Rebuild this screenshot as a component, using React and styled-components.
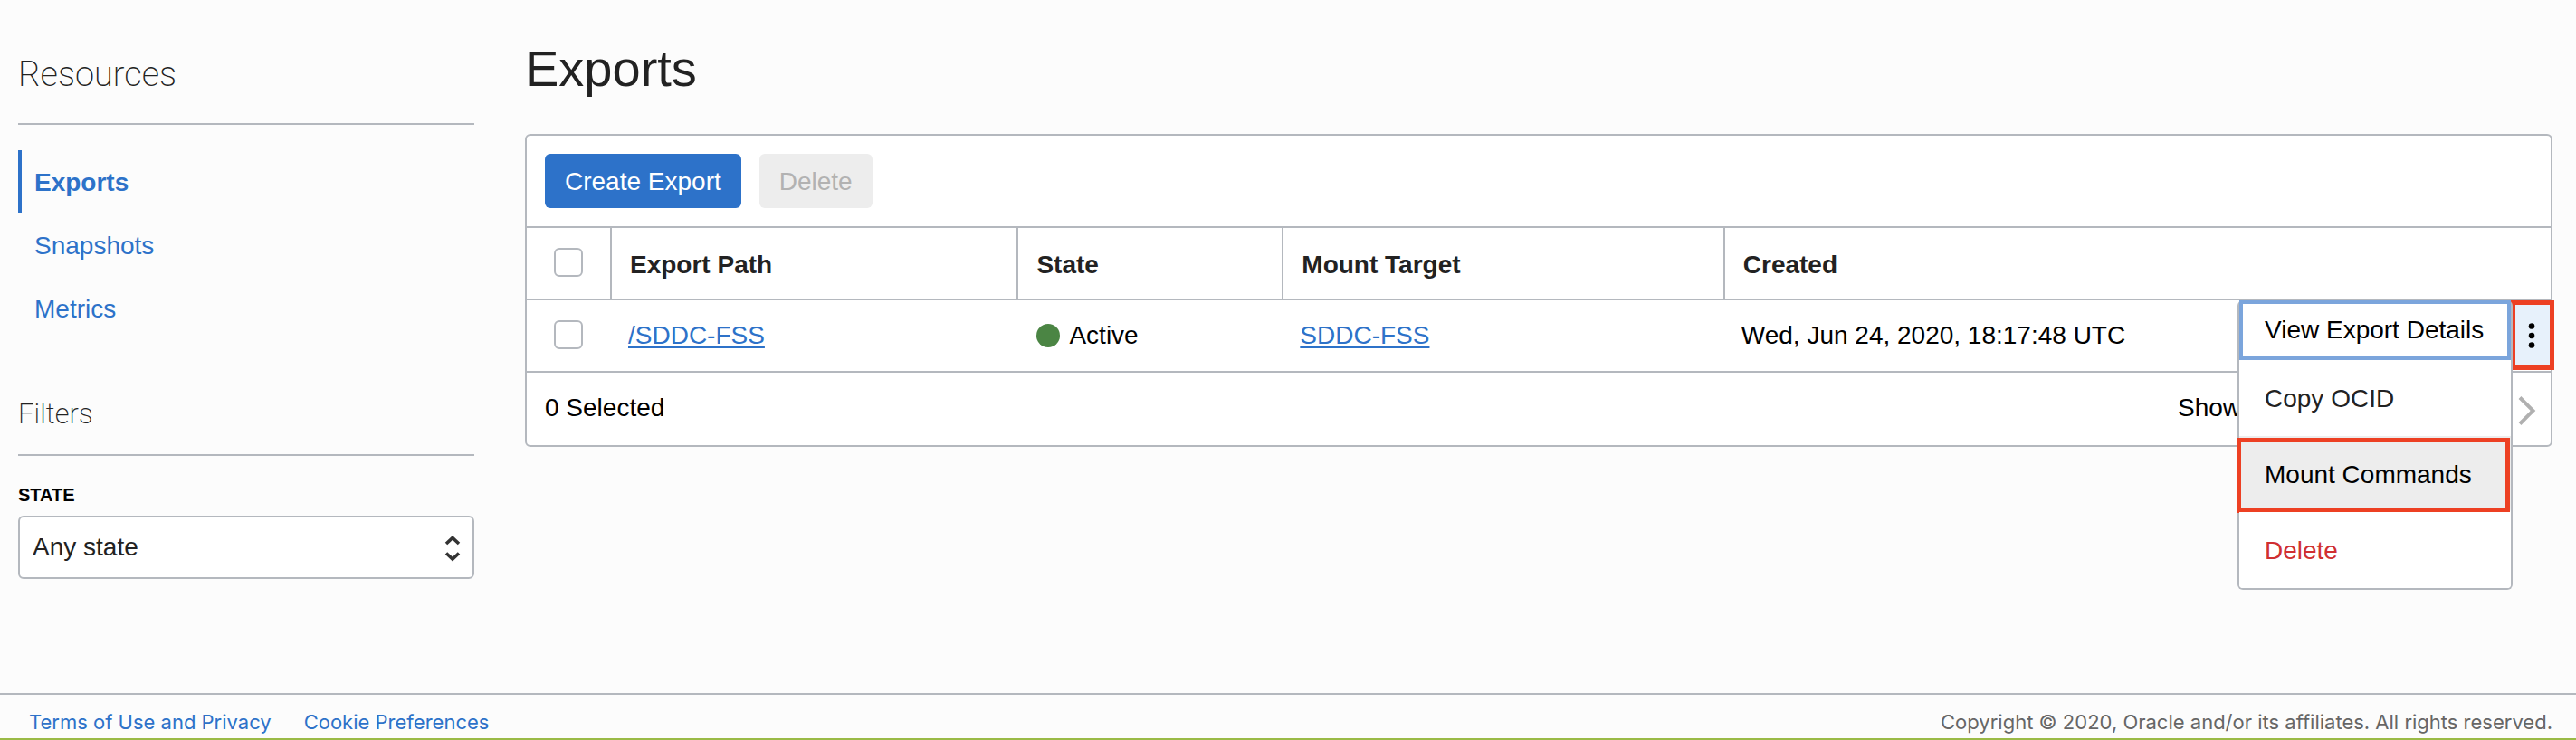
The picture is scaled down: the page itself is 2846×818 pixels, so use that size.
import React from "react";
import styled, { createGlobalStyle, css } from "styled-components";

const line = "#b4b8be";
const blue = "#2d72c9";
const callout = "#ed4023";

const GlobalStyle = createGlobalStyle`
  *, *::before, *::after { box-sizing: border-box; }
  body {
    margin: 0;
    background: #fcfcfc;
    color: #222;
    font: 28px/32px "Liberation Sans", Arial, sans-serif;
  }
  button, select { font: inherit; }
  h1, h2, ul { margin: 0; padding: 0; }
  ul { list-style: none; }
`;

const Page = styled.div`
  display: flex;
  flex-direction: column;
  min-height: 100vh;
`;

const Content = styled.div`
  flex: 1;
  display: flex;
  gap: 56px;
  padding: 0 26px 0 20px;
`;

const Sidebar = styled.aside`
  flex: none;
  width: 504px;
  padding-top: 58px;
`;

const SideTitle = styled.h2`
  font-family: Roboto, "Liberation Sans", sans-serif;
  font-weight: 200;
  font-size: ${(p) => (p.$small ? 31 : 38)}px;
  line-height: 48px;
  padding-bottom: ${(p) => (p.$small ? 20 : 30)}px;
  border-bottom: 2px solid ${line};
`;

const Nav = styled.ul`
  padding: 28px 0 58px;
`;

const NavLink = styled.a`
  display: flex;
  align-items: center;
  height: 70px;
  padding: 2px 0 0 14px;
  border-left: 4px solid ${(p) => (p.$active ? blue : "transparent")};
  color: ${blue};
  font-weight: ${(p) => (p.$active ? 700 : 400)};
  text-decoration: none;
`;

const FilterLabel = styled.label`
  display: block;
  padding: 28px 0 8px;
  color: #000;
  font-size: 20px;
  line-height: 30px;
  font-weight: 700;
`;

const SelectBox = styled.div`
  display: grid;
  align-items: center;
  & > * { grid-area: 1 / 1; }
  svg {
    justify-self: end;
    margin: 2px 14px 0 0;
    pointer-events: none;
  }
`;

const Select = styled.select`
  appearance: none;
  width: 100%;
  height: 70px;
  padding: 0 48px 0 14px;
  border: 2px solid ${line};
  border-radius: 6px;
  background: #fff;
  color: #222;
`;

const Main = styled.main`
  flex: 1;
  min-width: 0;
  padding-top: 44px;
`;

const Title = styled.h1`
  font-size: 56px;
  line-height: 64px;
  font-weight: 400;
  margin-bottom: 40px;
`;

const Panel = styled.section`
  position: relative;
  border: 2px solid ${line};
  border-radius: 6px;
  background: #fff;
`;

const Toolbar = styled.div`
  display: flex;
  gap: 20px;
  padding: 20px;
  border-bottom: 2px solid ${line};
`;

const Button = styled.button`
  height: 60px;
  padding: 2px 22px 0;
  border: 0;
  border-radius: 6px;
  background: ${blue};
  color: #fff;
  &:disabled {
    background: #ededed;
    color: #b2b2b2;
  }
`;

const Table = styled.table`
  width: 100%;
  table-layout: fixed;
  border-collapse: separate;
  border-spacing: 0;
  tr { height: 80px; }
`;

const Col = styled.col`
  width: ${(p) => p.$w};
`;

const cell = css`
  padding: 0 0 0 18px;
  border-bottom: 2px solid ${line};
  text-align: left;
`;

const Th = styled.th`
  ${cell}
  padding: 4px 0 0 20px;
  border-right: ${(p) => (p.$divided ? 2 : 0)}px solid ${line};
  color: #222;
`;

const Td = styled.td`
  ${cell}
  color: #000;
`;

const CheckCell = styled.td`
  padding: 0 0 0 30px;
  border-bottom: 2px solid ${line};
  border-right: ${(p) => (p.$divided ? 2 : 0)}px solid ${line};
`;

const Checkbox = styled.input.attrs({ type: "checkbox" })`
  appearance: none;
  display: block;
  width: 32px;
  height: 32px;
  margin: 0 0 2px;
  border: 2px solid ${line};
  border-radius: 6px;
  background: #fff;
`;

const PathLink = styled.a`
  color: ${blue};
  text-decoration: underline;
  text-decoration-thickness: 2px;
  text-underline-offset: 3px;
`;

const State = styled.span`
  display: flex;
  align-items: center;
  gap: 10px;
  padding-left: 2px;
  &::before {
    content: "";
    width: 26px;
    height: 26px;
    border-radius: 50%;
    background: #4b8544;
  }
`;

const ActionCell = styled(Td)`
  position: relative;
  padding: 5px 1px 6px;
  vertical-align: top;
`;

const KebabButton = styled.button`
  display: flex;
  align-items: center;
  justify-content: center;
  width: 38px;
  height: 67px;
  margin-left: auto;
  padding: 0 2px 0 0;
  border: 0;
  background: #e7f1fb;
  outline: 5px solid ${callout};
`;

const Menu = styled.ul`
  position: absolute;
  z-index: 1;
  top: 0;
  right: 42px;
  width: 304px;
  border: 2px solid ${line};
  border-top: 0;
  border-radius: 6px;
  background: #fff;
`;

const MenuItem = styled.button`
  position: relative;
  display: block;
  width: 100%;
  height: ${(p) => (p.$focused ? 66 : 84)}px;
  padding: ${(p) => (p.$focused ? "0 0 0 24px" : "2px 0 0 28px")};
  border: ${(p) => (p.$focused ? "4px solid #7ba5dc" : "0")};
  border-radius: ${(p) => (p.$focused ? 0 : "0 0 4px 4px")};
  background: ${(p) => (p.$marked ? "#ededed" : "#fff")};
  color: ${(p) => p.$color || "#000"};
  text-align: left;
  ${(p) =>
    p.$marked &&
    css`
      &::after {
        content: "";
        position: absolute;
        inset: 2px 1px -1px -3px;
        border: 5px solid ${callout};
      }
    `}
`;

const PanelFooter = styled.div`
  display: flex;
  align-items: center;
  height: 80px;
  padding: 0 16px 2px 20px;
  color: #000;
`;

const Paging = styled.div`
  display: flex;
  align-items: center;
  justify-content: space-between;
  width: 396px;
  margin-left: auto;
`;

const NextButton = styled.button`
  display: flex;
  padding: 6px 0 0;
  border: 0;
  background: none;
`;

const Footer = styled.footer`
  display: flex;
  justify-content: space-between;
  height: 52px;
  padding: 16px 26px 0 32px;
  border-top: 2px solid ${line};
  border-bottom: 2px solid #9aba46;
  color: #666;
  font: 22px/28px Inter, "Liberation Sans", sans-serif;
`;

const FooterLinks = styled.nav`
  display: flex;
  gap: 36px;
  a {
    color: ${blue};
    text-decoration: none;
  }
`;

export default function App() {
  return (
    <>
      <GlobalStyle />
      <Page>
        <Content>
          <Sidebar>
            <SideTitle>Resources</SideTitle>
            <Nav>
              <li><NavLink href="#exports" $active>Exports</NavLink></li>
              <li><NavLink href="#snapshots">Snapshots</NavLink></li>
              <li><NavLink href="#metrics">Metrics</NavLink></li>
            </Nav>
            <SideTitle $small>Filters</SideTitle>
            <FilterLabel htmlFor="state">STATE</FilterLabel>
            <SelectBox>
              <Select id="state" defaultValue="any">
                <option value="any">Any state</option>
              </Select>
              <svg width="20" height="30" viewBox="0 0 20 30" fill="none" stroke="#333" strokeWidth="3.6">
                <path d="M3 10 10 3.5 17 10M3 20.500 10 27 17 20.500" />
              </svg>
            </SelectBox>
          </Sidebar>
          <Main>
            <Title>Exports</Title>
            <Panel>
              <Toolbar>
                <Button>Create Export</Button>
                <Button disabled>Delete</Button>
              </Toolbar>
              <Table>
                <colgroup>
                  <Col $w="94px" />
                  <Col $w="20.1%" />
                  <Col $w="13.1%" />
                  <Col $w="21.8%" />
                  <Col />
                  <Col $w="60px" />
                </colgroup>
                <thead>
                  <tr>
                    <CheckCell $divided><Checkbox aria-label="Select all exports" /></CheckCell>
                    <Th $divided>Export Path</Th>
                    <Th $divided>State</Th>
                    <Th $divided>Mount Target</Th>
                    <Th colSpan={2}>Created</Th>
                  </tr>
                </thead>
                <tbody>
                  <tr>
                    <CheckCell><Checkbox aria-label="Select /SDDC-FSS" /></CheckCell>
                    <Td><PathLink href="#export">/SDDC-FSS</PathLink></Td>
                    <Td><State>Active</State></Td>
                    <Td><PathLink href="#mount-target">SDDC-FSS</PathLink></Td>
                    <Td>Wed, Jun 24, 2020, 18:17:48 UTC</Td>
                    <ActionCell>
                      <KebabButton aria-label="Actions" aria-expanded="true">
                        <svg width="8" height="30" viewBox="0 0 8 30">
                          <circle cx="4" cy="4.500" r="3.300" />
                          <circle cx="4" cy="15" r="3.300" />
                          <circle cx="4" cy="25.500" r="3.300" />
                        </svg>
                      </KebabButton>
                      <Menu>
                        <li><MenuItem $focused>View Export Details</MenuItem></li>
                        <li><MenuItem $color="#222">Copy OCID</MenuItem></li>
                        <li><MenuItem $marked>Mount Commands</MenuItem></li>
                        <li><MenuItem $color="#d02f31">Delete</MenuItem></li>
                      </Menu>
                    </ActionCell>
                  </tr>
                </tbody>
              </Table>
              <PanelFooter>
                <span>0 Selected</span>
                <Paging>
                  <span>Show</span>
                  <NextButton aria-label="Next page">
                    <svg width="20" height="34" viewBox="0 0 20 34" fill="none" stroke="#b0b0b0" strokeWidth="4">
                      <path d="M2 2.500 16.500 17 2 31.500" />
                    </svg>
                  </NextButton>
                </Paging>
              </PanelFooter>
            </Panel>
          </Main>
        </Content>
        <Footer>
          <FooterLinks>
            <a href="#terms">Terms of Use and Privacy</a>
            <a href="#cookies">Cookie Preferences</a>
          </FooterLinks>
          <span>Copyright © 2020, Oracle and/or its affiliates. All rights reserved.</span>
        </Footer>
      </Page>
    </>
  );
}
